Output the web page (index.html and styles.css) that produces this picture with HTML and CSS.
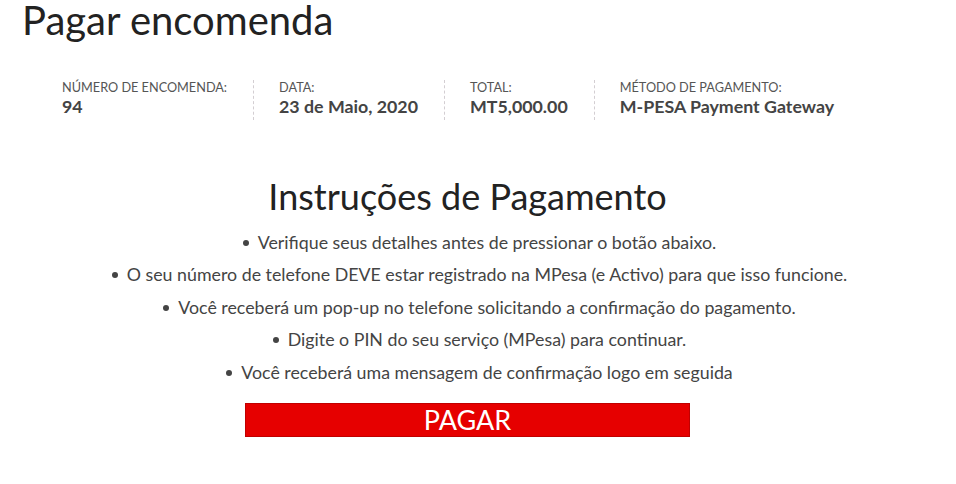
FILE: index.html
```
<!DOCTYPE html>
<html lang="pt">
<head>
<meta charset="utf-8">
<title>Pagar encomenda</title>
<link rel="stylesheet" href="styles.css">
</head>
<body>
<main class="page">
  <h1 class="page-title">Pagar encomenda</h1>
  <ul class="order-overview">
    <li class="order-item">
      <span class="order-label">Número de encomenda:</span>
      <strong class="order-value">94</strong>
    </li>
    <li class="order-item">
      <span class="order-label">Data:</span>
      <strong class="order-value">23 de Maio, 2020</strong>
    </li>
    <li class="order-item">
      <span class="order-label">Total:</span>
      <strong class="order-value">MT5,000.00</strong>
    </li>
    <li class="order-item last">
      <span class="order-label">Método de pagamento:</span>
      <strong class="order-value">M-PESA Payment Gateway</strong>
    </li>
  </ul>
  <section class="instructions">
    <h2 class="instructions-title">Instruções de Pagamento</h2>
    <ul class="instructions-list">
      <li>Verifique seus detalhes antes de pressionar o botão abaixo.</li>
      <li>O seu número de telefone DEVE estar registrado na MPesa (e Activo) para que isso funcione.</li>
      <li>Você receberá um pop-up no telefone solicitando a confirmação do pagamento.</li>
      <li>Digite o PIN do seu serviço (MPesa) para continuar.</li>
      <li>Você receberá uma mensagem de confirmação logo em seguida</li>
    </ul>
    <div class="pay-row">
      <button class="pay-button" type="button">PAGAR</button>
    </div>
  </section>
</main>
</body>
</html>
```
FILE: styles.css
```
html, body {
  margin: 0;
  padding: 0;
  background: #fff;
}
body {
  font-family: Lato, "Open Sans", "Liberation Sans", sans-serif;
  color: #404040;
}
.page {
  width: 891px;
  margin-left: 22px;
}
.page-title {
  margin: 0;
  font-size: 40px;
  font-weight: 400;
  line-height: 41px;
  color: #222;
}
.order-overview {
  list-style: none;
  margin: 39px 0 0;
  padding: 0 0 0 40px;
  display: flex;
}
.order-item {
  display: flex;
  flex-direction: column;
  margin-right: 25px;
  padding-right: 26px;
  border-right: 1px dashed #d3ced2;
}
.order-item.last {
  border-right: 0;
}
.order-label {
  font-size: 12.7px;
  line-height: 14px;
  text-transform: uppercase;
  color: #555;
}
.order-value {
  font-size: 17.8px;
  font-weight: 700;
  line-height: 24px;
  padding-bottom: 2px;
  color: #444;
}
.instructions {
  margin-top: 54.5px;
}
.instructions-title {
  margin: 0 0 8px;
  text-align: center;
  font-size: 36px;
  font-weight: 400;
  line-height: 1.2;
  color: #222;
}
.instructions-list {
  margin: 0;
  padding: 0 0 0 24px;
  list-style: none;
  text-align: center;
  font-size: 17.8px;
  line-height: 32.5px;
  color: #444;
}
.instructions-list li::before {
  content: "";
  display: inline-block;
  width: 6px;
  height: 6px;
  border-radius: 50%;
  background: #444;
  margin-right: 9px;
  vertical-align: 3px;
}
.pay-row {
  display: flex;
  justify-content: center;
  margin-top: 15px;
}
.pay-button {
  width: 445px;
  height: 34px;
  padding: 0;
  border: 1px solid #c00000;
  background: #e60000;
  color: #fff;
  font-family: Lato, "Open Sans", "Liberation Sans", sans-serif;
  font-size: 27px;
  line-height: 32px;
  cursor: pointer;
}
```
